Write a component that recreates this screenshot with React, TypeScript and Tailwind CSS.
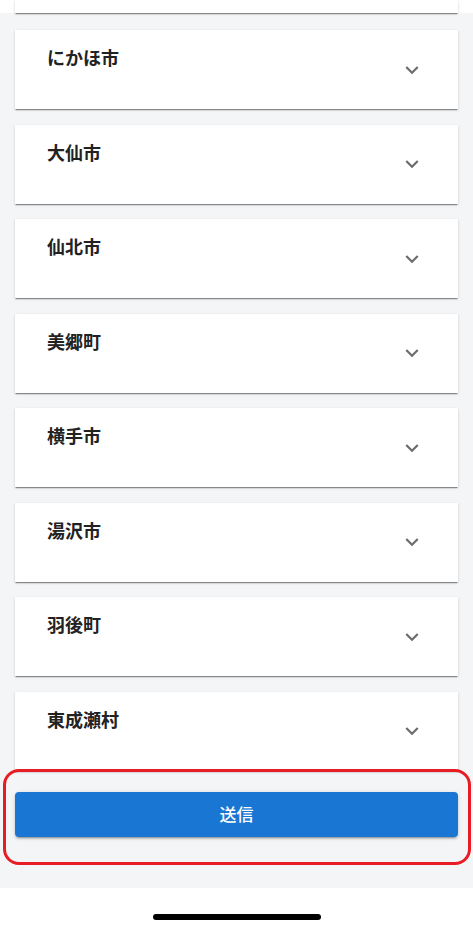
import React from "react";

const areas = ["にかほ市", "大仙市", "仙北市", "美郷町", "横手市", "湯沢市", "羽後町", "東成瀬村"];

const font = { fontFamily: '"Noto Sans CJK JP", "Noto Sans", sans-serif' };

export default function App() {
  return (
    <main className="min-h-[930px] bg-white" style={font}>
      <div className="bg-[#f4f5f7] pb-[51px]">
        {/* tail of the card above the fold */}
        <div className="bg-white px-[15px]">
          <div className="h-[13px] bg-white shadow-[0_2px_1px_-1px_rgba(0,0,0,0.3),0_1px_1px_0_rgba(0,0,0,0.14),0_1px_3px_0_rgba(0,0,0,0.12)]" />
        </div>

        <div className="flex flex-col gap-[15.5px] px-[15px] pt-[17px]">
          {areas.map((name) => (
            <AreaRow key={name} name={name} />
          ))}
        </div>

        {/* submit */}
        <div className="relative px-[15px] pt-[21px]">
          <button
            type="button"
            className="flex h-[45px] w-full items-center justify-center rounded-[4px] bg-[#1976d2] text-[17px] font-medium text-white shadow-[0_3px_1px_-2px_rgba(0,0,0,0.2),0_2px_2px_0_rgba(0,0,0,0.14),0_1px_5px_0_rgba(0,0,0,0.12)]"
          >
            送信
          </button>
          <div className="pointer-events-none absolute left-[3px] right-[2px] top-[-1.5px] bottom-[-28px] rounded-[16px] border-[3.5px] border-[#e81c24]" />
        </div>
      </div>

      {/* home indicator */}
      <div className="flex justify-center pt-[26px]">
        <div className="h-[6px] w-[168px] rounded-full bg-black" />
      </div>
    </main>
  );
}

function AreaRow({ name }: { name: string }) {
  return (
    <div className="flex h-[79px] bg-white pl-[32px] pr-[33px] shadow-[0_2px_1px_-1px_rgba(0,0,0,0.3),0_1px_1px_0_rgba(0,0,0,0.14),0_1px_3px_0_rgba(0,0,0,0.12)]">
      <p className="pt-[14px] text-[18px] font-bold leading-[27px] text-[#222]">{name}</p>
      <svg viewBox="0 0 24 24" className="ml-auto h-[26px] w-[26px] self-center fill-[#6b6b6b]">
        <path d="M16.59 8.59 12 13.17 7.41 8.59 6 10l6 6 6-6z" />
      </svg>
    </div>
  );
}
